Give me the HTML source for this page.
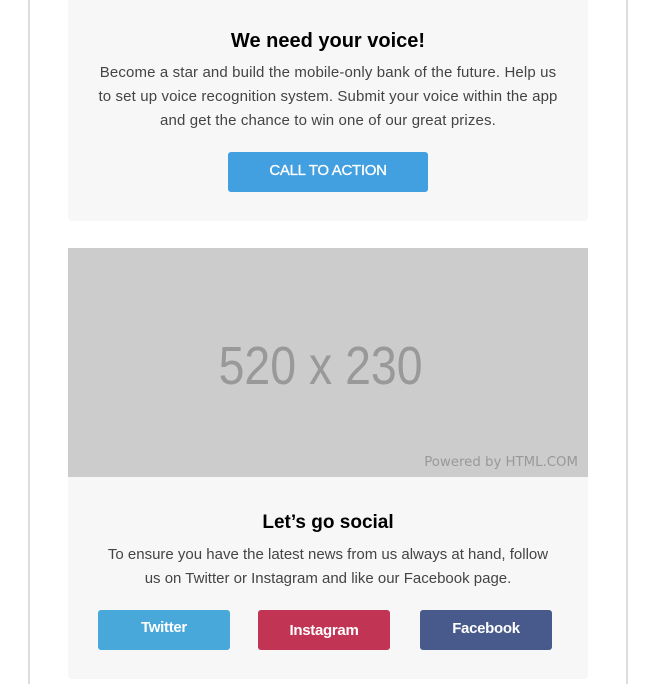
<!DOCTYPE html>
<html><head><meta charset="utf-8"><style>
*{margin:0;padding:0;box-sizing:border-box}
body{width:662px;height:684px;background:#fff;position:relative;overflow:hidden;font-family:"Liberation Sans",Arial,sans-serif}
.ln{position:absolute;top:0;width:2px;height:684px;background:#ddd}
.card{position:absolute;left:68px;width:520px;background:#f7f7f7}
.t{position:absolute;left:0;width:520px;text-align:center;color:#000;font-weight:bold}
.p{position:absolute;text-align:center;color:#444;font-size:15px;line-height:24px;white-space:nowrap}
.btn{position:absolute;height:40px;border-radius:3px;color:#fff;text-align:center;font-size:15px;font-weight:bold;letter-spacing:-0.3px}
</style></head><body>
<div class="ln" style="left:28px"></div>
<div class="ln" style="left:626px"></div>
<div class="card" style="top:0;height:221px;border-radius:0 0 4px 4px">
  <div class="t" style="top:29px;font-size:20px;line-height:24px">We need your voice!</div>
  <div class="p" style="left:0;width:520px;top:61px;letter-spacing:0.13px">Become a star and build the mobile-only bank of the future. Help us<br>to set up voice recognition system. Submit your voice within the app<br>and get the chance to win one of our great prizes.</div>
  <div class="btn" style="left:160px;top:152px;width:200px;background:#42a0e0;line-height:38px;font-weight:normal;-webkit-text-stroke:0.3px #fff">CALL TO ACTION</div>
</div>
<div style="position:absolute;left:68px;top:248px;width:520px;height:229px;background:#ccc">
  <div style="position:absolute;left:0;width:505px;top:86px;text-align:center;font-size:54px;line-height:64px;color:#999;transform:scaleX(0.86);transform-origin:253px 0">520 x 230</div>
  <div style="position:absolute;right:10px;top:207px;font-family:'DejaVu Sans',sans-serif;font-size:13.3px;color:#999">Powered by HTML.COM</div>
</div>
<div class="card" style="top:477px;height:202px;border-radius:0 0 4px 4px">
  <div class="t" style="top:35px;font-size:19px;line-height:22px">Let’s go social</div>
  <div class="p" style="left:0;width:520px;top:66px">To ensure you have the latest news from us always at hand, follow<br>us on Twitter or Instagram and like our Facebook page.</div>
  <div class="btn" style="left:30px;top:133px;width:132px;background:#48a8da;line-height:36px">Twitter</div>
  <div class="btn" style="left:190px;top:133px;width:132px;background:#c23453;line-height:42px">Instagram</div>
  <div class="btn" style="left:352px;top:133px;width:132px;background:#485a8c;line-height:37px">Facebook</div>
</div>
</body></html>
